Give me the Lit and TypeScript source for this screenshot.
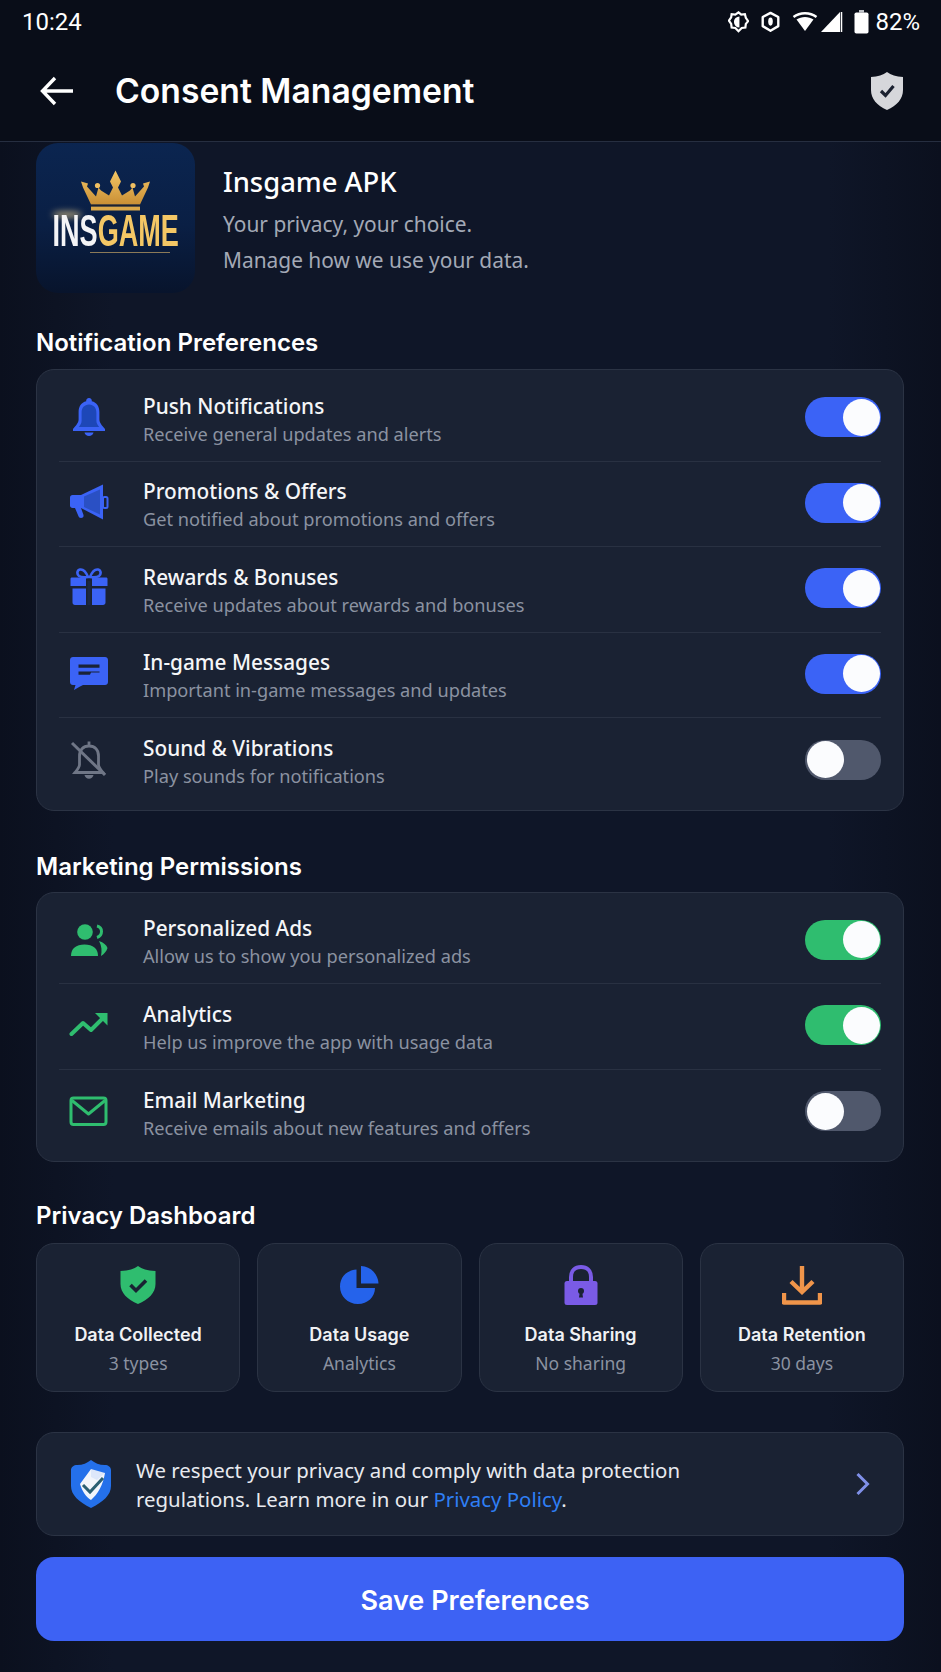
import { LitElement, html, css, svg, unsafeCSS } from 'lit'
import { customElement } from 'lit/decorators.js'

const BLUE = '#3b63f6'
const GREEN = '#2fbd6f'

const icons = {
  bell: svg`<path d="M20 1a2.800 2.800 0 0 1 2.800 3.300c5 1.200 7.600 5.400 7.600 10.700v7.500c0 3.500 2.800 6 5.600 9.500v2H4v-2c2.800-3.500 5.600-6 5.600-9.500V15c0-5.300 2.600-9.500 7.600-10.700A2.800 2.800 0 0 1 20 1z" fill="${BLUE}"/><path d="M20 7.500c-4.800 0-7.400 3.600-7.400 8.200v8c0 2.400-1.200 4.300-2.800 6.300h20.400c-1.600-2-2.800-3.900-2.800-6.300v-8c0-4.600-2.600-8.200-7.400-8.200z" fill="#1d47b8"/><path d="M15.500 35.500h9c-.4 2.300-2.200 3.500-4.500 3.500s-4.100-1.200-4.500-3.500z" fill="${BLUE}"/>`,
  megaphone: svg`<path d="M1 14.500c0-1.400 1-2.500 2.500-2.500H12v13H3.500C2 25 1 24 1 22.500z" fill="${BLUE}"/><path d="M6 25h6l2.500 7c.5 1.700-.8 3-2.500 3-1.500 0-2.200-.8-2.600-2z" fill="${BLUE}"/><path d="M12 12 34 1.500v35L12 25z" fill="${BLUE}"/><path d="M15 13.500 31 6.500v25L15 24z" fill="#2a50c4"/><rect x="34" y="14" width="4.500" height="11" rx="1.500" fill="none" stroke="${BLUE}" stroke-width="2"/>`,
  gift: svg`<path d="M19 9c-2-5-5-8-8-7.500-3 .6-3.500 4.500-1 6.500 1.800 1.300 5 1.500 9 1z M21 9c2-5 5-8 8-7.500 3 .6 3.500 4.500 1 6.500-1.800 1.300-5 1.500-9 1z" fill="none" stroke="${BLUE}" stroke-width="2.600"/><path d="M3 9.500h14v8.500H1.500v-7C1.500 10 2 9.500 3 9.500z M23 9.500h14c1 0 1.500.5 1.500 1.500v7H23z" fill="${BLUE}"/><path d="M3.500 20.500H17v16.500H6c-1.500 0-2.500-1-2.500-2.500z M23 20.500h13.500v14c0 1.500-1 2.500-2.500 2.500H23z" fill="${BLUE}"/><rect x="18.500" y="13" width="3" height="24" fill="#1d2942"/>`,
  message: svg`<path d="M4 3h32c1.700 0 3 1.300 3 3v22c0 1.700-1.300 3-3 3H14l-3 1.500-6 3.500 1.500-5H4c-1.700 0-3-1.300-3-3V6c0-1.700 1.300-3 3-3z" fill="${BLUE}"/><path d="M9.500 10.500h21v3.200h-21z M9.500 17.500h21v1H22l-1 2.200H9.500z" fill="#1a2336"/>`,
  belloff: svg`<g fill="none" stroke="#6f7686" stroke-width="2.800"><path d="M20 1.500v4M10.500 16c0-6 3.500-10 9.500-10s9.500 4 9.500 10v8.500c0 3 2 5 4.500 8H6c2.500-3 4.500-5 4.500-8z"/><path d="M3 3l33 32" stroke-width="3"/></g><path d="M15.500 35h9c-.5 2.400-2.300 3.800-4.500 3.800s-4-1.400-4.500-3.800z" fill="#6f7686"/>`,
  people: svg`<circle cx="16" cy="12" r="7.800" fill="${GREEN}"/><path d="M2 36c0-7.500 5-11.500 13.500-11.500S29 28.500 29 36z" fill="${GREEN}"/><path d="M28 6c3 .7 4.500 2.800 4.500 5.500s-1.500 5-4.500 6" fill="none" stroke="${GREEN}" stroke-width="3"/><path d="M30 21c4.500 1.500 7.500 4 8.500 7-1 3.500-3.500 6-6.500 8 1-5 .8-10-2-15z" fill="${GREEN}"/>`,
  trend: svg`<path d="M2.500 29 14 18l8 7L36 11" fill="none" stroke="${GREEN}" stroke-width="4" stroke-linecap="round" stroke-linejoin="round"/><path d="M26 8h12.500v12.500z" fill="${GREEN}"/>`,
  mail: svg`<rect x="2" y="7" width="35" height="26.500" rx="2.500" fill="none" stroke="${GREEN}" stroke-width="3"/><path d="M3 9.500 19.500 23 36 9.500" fill="none" stroke="${GREEN}" stroke-width="3" stroke-linejoin="round"/>`,
  dataShield: svg`<path d="M20 1c4 3 9 4.500 17.500 5v13c0 9-7 15.500-17.500 20C9.500 34.500 2.500 28 2.500 19V6C11 5.500 16 4 20 1z" fill="${GREEN}"/><path d="m12.500 20 5.500 5.500 10-10" fill="none" stroke="#192233" stroke-width="3.600"/>`,
  pie: svg`<path d="M17.500 4.500v18.500H36c0 9-7.500 16-17 16C8.500 39 1 31 1 21.500 1 12 8 5 17.500 4.500z" fill="#2563eb"/><path d="M22 1c9.500.3 17 8 17.500 17.500H22z" fill="#2563eb"/>`,
  lock: svg`<path d="M10 20v-8c0-6 4-10 10-10s10 4 10 10v8" fill="none" stroke="#7a5be6" stroke-width="4"/><rect x="3.500" y="16" width="33" height="24" rx="2.500" fill="#7a5be6"/><circle cx="20" cy="26" r="3" fill="#1a2233"/><path d="M18.800 27h2.400l.8 5.500h-4z" fill="#1a2233"/>`,
  download: svg`<path d="M20 1v26M9 16.500 20 27l11-10.500" fill="none" stroke="#f0954a" stroke-width="4.400"/><path d="M2 28v9.500h36V28" fill="none" stroke="#f0954a" stroke-width="4.400" stroke-linejoin="round"/>`,
}

type IconName = keyof typeof icons

const notifications: [IconName, string, string, boolean][] = [
  ['bell', 'Push Notifications', 'Receive general updates and alerts', true],
  ['megaphone', 'Promotions & Offers', 'Get notified about promotions and offers', true],
  ['gift', 'Rewards & Bonuses', 'Receive updates about rewards and bonuses', true],
  ['message', 'In-game Messages', 'Important in-game messages and updates', true],
  ['belloff', 'Sound & Vibrations', 'Play sounds for notifications', false],
]

const marketing: [IconName, string, string, boolean][] = [
  ['people', 'Personalized Ads', 'Allow us to show you personalized ads', true],
  ['trend', 'Analytics', 'Help us improve the app with usage data', true],
  ['mail', 'Email Marketing', 'Receive emails about new features and offers', false],
]

const dashboard: [IconName, string, string][] = [
  ['dataShield', 'Data Collected', '3 types'],
  ['pie', 'Data Usage', 'Analytics'],
  ['lock', 'Data Sharing', 'No sharing'],
  ['download', 'Data Retention', '30 days'],
]

@customElement('app-root')
export class AppRoot extends LitElement {
  static styles = css`
    :host {
      display: block;
      width: 941px;
      height: 1672px;
      overflow: hidden;
      background: linear-gradient(90deg, #0b101e 0%, #0f1628 12%, #0f1628 88%, #0b101e 100%);
      color: #fff;
      font-family: 'Noto Sans', sans-serif;
    }
    .top {
      height: 141px;
      background: #090d18;
      border-bottom: 1px solid #262e40;
    }
    .status {
      height: 44px;
      padding: 0 21px 0 22px;
      display: flex;
      align-items: center;
      justify-content: space-between;
      font-family: Roboto, sans-serif;
      font-size: 24px;
    }
    .status-icons {
      display: flex;
      align-items: center;
      gap: 11px;
    }
    .wifi {
      margin-right: -8px;
    }
    .battery {
      margin-right: -5px;
    }
    .bar {
      height: 93px;
      padding: 0 37px 0 40px;
      display: flex;
      align-items: center;
      justify-content: space-between;
    }
    .bar-left {
      display: flex;
      align-items: center;
      gap: 41px;
    }
    h1 {
      margin: 0;
      font-family: Inter, sans-serif;
      font-size: 33.7px;
      font-weight: 600;
    }
    main {
      padding: 1px 37px 0 36px;
    }
    .app {
      display: flex;
      gap: 28px;
      height: 150px;
    }
    .logo {
      position: relative;
      width: 159px;
      height: 150px;
      flex: none;
      border-radius: 22px;
      background: linear-gradient(180deg, #0b2550 0%, #0a1f44 55%, #08142c 100%);
      display: flex;
      flex-direction: column;
      align-items: center;
      padding-top: 27px;
      box-sizing: border-box;
    }
    .logo::before {
      content: '';
      position: absolute;
      left: 16px;
      top: 68px;
      width: 30px;
      height: 7px;
      border-radius: 50%;
      background: #d8c088;
      filter: blur(3px);
      opacity: 0.7;
    }
    .logo-text {
      position: relative;
      font-family: 'Liberation Sans', sans-serif;
      font-weight: 700;
      font-size: 44px;
      line-height: 36px;
      margin-top: 1px;
      color: #f4c765;
      white-space: nowrap;
      transform: scaleX(0.615);
    }
    .logo-text span {
      color: #f4f4f6;
    }
    .logo-line {
      width: 80px;
      height: 1px;
      margin: 3px 0 0 28px;
      background: #8c7a58;
    }
    .app-info {
      padding-top: 23px;
    }
    .app-name {
      font-family: 'Noto Sans', sans-serif;
      font-size: 27.4px;
      font-weight: 500;
      line-height: 32px;
    }
    .app-line {
      font-size: 20.9px;
      line-height: 36px;
      color: #a3a9b6;
    }
    .app-line.first {
      margin-top: 8px;
    }
    h2 {
      margin: 0;
      font-family: Inter, sans-serif;
      font-size: 24px;
      font-weight: 600;
      line-height: 28px;
    }
    .card {
      background: #1a2233;
      border: 1px solid #2b3344;
      border-radius: 18px;
      box-sizing: border-box;
    }
    .list {
      padding: 6px 22px 6px 22px;
      margin-top: 12px;
    }
    .row {
      height: 85.5px;
      padding-bottom: 2px;
      display: flex;
      align-items: center;
      box-sizing: border-box;
      border-bottom: 1px solid #293142;
    }
    .row:last-child {
      border-bottom: 0;
    }
    .icon {
      width: 60px;
      margin-right: 24px;
      display: flex;
      justify-content: center;
      flex: none;
    }
    .text {
      flex: 1;
      padding-top: 4px;
    }
    .name {
      font-family: 'Noto Sans', sans-serif;
      font-size: 20.8px;
      font-weight: 500;
      line-height: 30px;
      color: #f5f6f8;
    }
    .sub {
      font-size: 18.2px;
      line-height: 27px;
      color: #8b92a1;
    }
    .toggle {
      width: 76px;
      height: 40px;
      border-radius: 20px;
      background: #50586c;
      padding: 1.5px;
      box-sizing: border-box;
      display: flex;
      flex: none;
      justify-content: flex-start;
    }
    .toggle.blue {
      background: ${unsafeCSS(BLUE)};
      justify-content: flex-end;
    }
    .toggle.green {
      background: ${unsafeCSS(GREEN)};
      justify-content: flex-end;
    }
    .knob {
      width: 37px;
      height: 37px;
      border-radius: 50%;
      background: #fbfcfe;
    }
    .sec1 {
      margin-top: 36px;
    }
    .sec2 {
      margin-top: 42px;
    }
    .sec2 .list {
      margin-top: 11px;
    }
    .sec3 {
      margin-top: 40px;
    }
    .dash {
      margin-top: 13px;
      display: grid;
      grid-template-columns: repeat(4, 1fr);
      gap: 17px;
    }
    .tile {
      height: 149px;
      display: flex;
      flex-direction: column;
      align-items: center;
      padding-top: 21px;
      box-sizing: border-box;
    }
    .tile-name {
      margin-top: 16px;
      font-family: Inter, sans-serif;
      font-size: 18px;
      font-weight: 600;
      line-height: 28px;
      color: #f0f1f4;
    }
    .tile-sub {
      font-size: 17.5px;
      line-height: 28px;
      color: #8b92a1;
    }
    .note {
      margin-top: 40px;
      height: 104px;
      padding: 0 32px 0 33px;
      display: flex;
      align-items: center;
    }
    .note-icon {
      flex: none;
      margin-right: 24px;
    }
    .note-text {
      flex: 1;
      padding-top: 1px;
      font-size: 20.4px;
      line-height: 29px;
      color: #e8eaef;
    }
    .note-text a {
      color: #2f7ff5;
    }
    .save {
      display: block;
      margin-top: 21px;
      width: 100%;
      height: 84px;
      padding: 2px 0 0 10px;
      border: 0;
      border-radius: 18px;
      background: #3d62f4;
      color: #fff;
      font-family: Inter, sans-serif;
      font-size: 27px;
      font-weight: 600;
    }
  `

  private icon(name: IconName, size = 40) {
    return html`<svg width=${size} height=${size} viewBox="0 0 40 40">${icons[name]}</svg>`
  }

  private rows(items: [IconName, string, string, boolean][], onColor: string) {
    return items.map(
      ([icon, name, sub, on]) => html`
        <div class="row">
          <div class="icon">${this.icon(icon)}</div>
          <div class="text">
            <div class="name">${name}</div>
            <div class="sub">${sub}</div>
          </div>
          <div class="toggle ${on ? onColor : ''}"><div class="knob"></div></div>
        </div>
      `
    )
  }

  render() {
    return html`
      <div class="top">
        <div class="status">
          <span>10:24</span>
          <div class="status-icons">
            <svg width="21" height="22" viewBox="0 0 22 24">
              <path d="M11 1.500l3 2.500 4-.5 1 4 2.500 3.500L19 14l-.5 4-4 .5L11 22l-3.500-3.500-4-.5-.5-4L.5 10.500 3 7l.5-3.500 4 .5z" fill="none" stroke="#fff" stroke-width="2.400"/>
              <path d="M12 6a5.500 5.500 0 0 0 0 12z" fill="#fff"/>
            </svg>
            <svg width="21" height="22" viewBox="0 0 22 24">
              <path d="M11 2l8.500 4.500v10L11 21.500 2.500 16.500v-10z" fill="none" stroke="#fff" stroke-width="2.600" stroke-linejoin="round"/>
              <ellipse cx="11" cy="11.500" rx="2.500" ry="4.500" fill="#fff"/>
            </svg>
            <svg class="wifi" width="26" height="22" viewBox="0 0 26 22">
              <path d="M13 20 4.500 8.500C9.500 5 16.500 5 21.500 8.500z" fill="#fff"/>
              <path d="M1.500 6C8 1 18 1 24.500 6" fill="none" stroke="#fff" stroke-width="2.400"/>
            </svg>
            <svg width="22" height="22" viewBox="0 0 22 22">
              <path d="M0 21 19 1v20z" fill="#fff"/>
              <path d="M20.500 1v20" stroke="#fff" stroke-width="1.500"/>
            </svg>
            <svg class="battery" width="15" height="24" viewBox="0 0 15 24">
              <path d="M5 0h5v2.500H5z" fill="#bfc2c8"/>
              <rect x="0.500" y="2.500" width="14" height="21" rx="1.800" fill="#fff"/>
            </svg>
            <span>82%</span>
          </div>
        </div>
        <div class="bar">
          <div class="bar-left">
            <svg width="34" height="30" viewBox="0 0 34 30">
              <path d="M33 15H3M15 2 2.500 15 15 28" fill="none" stroke="#fff" stroke-width="3.400"/>
            </svg>
            <h1>Consent Management</h1>
          </div>
          <svg width="34" height="40" viewBox="0 0 34 40">
            <path d="M17 1c4 3 9 4.500 16 5v13c0 9-6 15.500-16 20C7 34.500 1 28 1 19V6c7-.5 12-2 16-5z" fill="#d6d7db"/>
            <path d="m11 20 4.500 4.500L23.500 15" fill="none" stroke="#1b2130" stroke-width="3.200"/>
          </svg>
        </div>
      </div>
      <main>
        <section class="app">
          <div class="logo">
            <svg width="71" height="42" viewBox="0 0 71 41">
              <defs>
                <linearGradient id="gold" x1="0" y1="0" x2="0" y2="1">
                  <stop offset="0" stop-color="#f4c766"/>
                  <stop offset="1" stop-color="#c98f35"/>
                </linearGradient>
              </defs>
              <path d="M35.500 0 41 11l-3 6 4 8 8-5 2.500-3 2.500 9 9-10-1-3 7-2-2 6-8 17H11L3 17l-2-6 7 2-1 3 9 10 2.500-9 2.500 3 8 5 4-8-3-6z" fill="url(#gold)"/>
              <circle cx="17.500" cy="15" r="2.600" fill="#f0c062"/>
              <circle cx="53" cy="15" r="2.600" fill="#f0c062"/>
              <path d="M11 36h49v4H11z" fill="#dba849"/>
              <path d="M11 35h49" stroke="#1b2130" stroke-width="1.500"/>
            </svg>
            <div class="logo-text"><span>INS</span>GAME</div>
            <div class="logo-line"></div>
          </div>
          <div class="app-info">
            <div class="app-name">Insgame APK</div>
            <div class="app-line first">Your privacy, your choice.</div>
            <div class="app-line">Manage how we use your data.</div>
          </div>
        </section>
        <section class="sec1">
          <h2>Notification Preferences</h2>
          <div class="card list">${this.rows(notifications, 'blue')}</div>
        </section>
        <section class="sec2">
          <h2>Marketing Permissions</h2>
          <div class="card list">${this.rows(marketing, 'green')}</div>
        </section>
        <section class="sec3">
          <h2>Privacy Dashboard</h2>
          <div class="dash">
            ${dashboard.map(
              ([icon, name, sub]) => html`
                <div class="card tile">
                  ${this.icon(icon)}
                  <div class="tile-name">${name}</div>
                  <div class="tile-sub">${sub}</div>
                </div>
              `
            )}
          </div>
        </section>
        <div class="card note">
          <svg class="note-icon" width="42" height="48" viewBox="0 0 42 48">
            <path d="M21 0c4 3 8 5 14 5 3 0 6 2 6 5v16c0 9-8 16-20 22C9 42 1 35 1 26V10c0-3 3-5 6-5 6 0 10-2 14-5z" fill="#2470ea"/>
            <path d="M21 9v5l14-1c-2 12-7 21-14 27-5-3-9-9-11-16z" fill="#f2f5fb"/>
            <path d="M21 9l14 4-8 7-6-3z" fill="#dde7fa"/>
            <path d="m13 25 7 7 13-14" fill="none" stroke="#2b5f72" stroke-width="3"/>
          </svg>
          <div class="note-text">
            We respect your privacy and comply with data protection<br />
            regulations. Learn more in our <a>Privacy Policy</a>.
          </div>
          <svg width="16" height="24" viewBox="0 0 16 24">
            <path d="M2.500 2 12.500 12 2.500 22" fill="none" stroke="#7f90e8" stroke-width="3"/>
          </svg>
        </div>
        <button class="save">Save Preferences</button>
      </main>
    `
  }
}
